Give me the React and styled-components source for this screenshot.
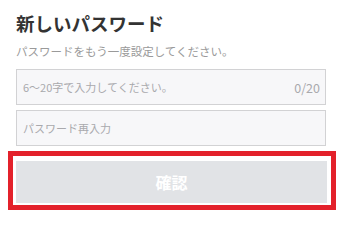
import React from 'react';
import styled, { createGlobalStyle } from 'styled-components';

const GlobalStyle = createGlobalStyle`
  html, body {
    margin: 0;
    padding: 0;
    background: #fff;
  }
  body {
    font-family: "Noto Sans CJK JP", "Noto Sans", sans-serif;
  }
`;

const Page = styled.div`
  width: 340px;
  height: 240px;
  box-sizing: border-box;
  padding: 9px 14px 0 16px;
  overflow: hidden;
`;

const Title = styled.h1`
  margin: 0;
  font-size: 18.5px;
  line-height: 28px;
  font-weight: 700;
  color: #333;
`;

const Description = styled.p`
  margin: 5px 0 0;
  font-size: 11.5px;
  line-height: 18px;
  color: #9a9a9a;
`;

const Form = styled.form`
  display: flex;
  flex-direction: column;
  gap: 5px;
  margin-top: 9px;
`;

const Field = styled.div`
  display: flex;
  align-items: center;
  height: 36px;
  box-sizing: border-box;
  padding: 0 5px 0 6px;
  border: 1px solid #d2d2d4;
  background: #f7f7f9;
`;

const Input = styled.input`
  flex: 1;
  min-width: 0;
  border: 0;
  outline: none;
  background: transparent;
  font-family: inherit;
  font-size: 11px;
  color: #333;
  padding: 0;

  &::placeholder {
    color: #a9a9ad;
  }
`;

const Counter = styled.span`
  font-size: 12.5px;
  color: #a9a9ad;
`;

const Highlight = styled.div`
  margin: 0 -10px 0 -8px;
  border: 5px solid #e3212b;
  padding: 5px 4px 2px 3px;
  background: #fff;
`;

const SubmitButton = styled.button`
  display: block;
  width: 100%;
  height: 42px;
  border: 0;
  background: #e1e3e6;
  color: #fff;
  font-family: inherit;
  font-size: 16px;
  font-weight: 700;
  cursor: default;
`;

export default function App() {
  return (
    <>
      <GlobalStyle />
      <Page>
        <Title>新しいパスワード</Title>
        <Description>パスワードをもう一度設定してください。</Description>
        <Form onSubmit={(e) => e.preventDefault()}>
          <Field>
            <Input type="password" placeholder="6〜20字で入力してください。" />
            <Counter>0/20</Counter>
          </Field>
          <Field>
            <Input type="password" placeholder="パスワード再入力" />
          </Field>
          <Highlight>
            <SubmitButton type="submit" disabled>確認</SubmitButton>
          </Highlight>
        </Form>
      </Page>
    </>
  );
}
